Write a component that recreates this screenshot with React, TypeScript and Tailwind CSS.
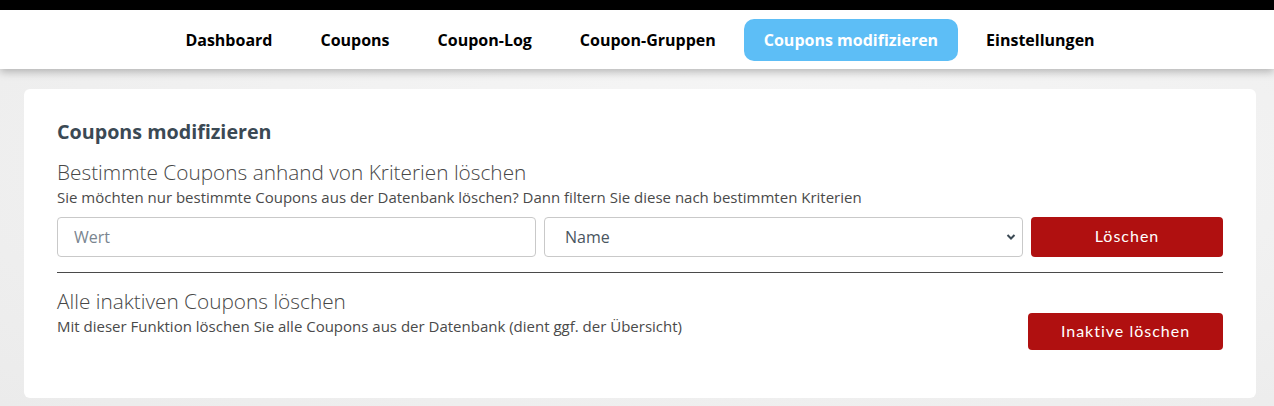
const NAV = [
  "Dashboard",
  "Coupons",
  "Coupon-Log",
  "Coupon-Gruppen",
  "Coupons modifizieren",
  "Einstellungen",
];

const ACTIVE = "Coupons modifizieren";

export default function App() {
  return (
    <div
      className="min-h-[406px] bg-[radial-gradient(ellipse_at_60%_40%,#f7f7f7,#ebebeb)]"
      style={{ fontFamily: "'Open Sans', sans-serif" }}
    >
      {/* schwarze Leiste oben */}
      <div className="h-[10px] bg-black" />

      {/* Navigation */}
      <nav className="relative z-10 h-[59px] bg-white shadow-[0_3px_8px_rgba(0,0,0,0.25)] flex items-center justify-center gap-2 pl-[6px]">
        {NAV.map((item) => (
          <a
            key={item}
            className={`px-5 h-[42px] flex items-center rounded-[10px] text-[16px] font-bold ${
              item === ACTIVE ? "bg-[#5dbef6] text-white" : "text-black"
            }`}
          >
            {item}
          </a>
        ))}
      </nav>

      {/* Inhalt */}
      <div className="pt-5 pl-6 pr-[18px]">
        <div className="bg-white rounded-md h-[309px] px-[33px] pt-[29px]">
          <h1 className="text-[19.7px] font-bold text-[#3b4954] leading-[28px]">
            Coupons modifizieren
          </h1>

          <h2 className="mt-[11px] text-[20.8px] font-light text-[#474747] leading-[30px]">
            Bestimmte Coupons anhand von Kriterien löschen
          </h2>
          <p className="text-[15px] text-[#4a4a4a] leading-[20px]">
            Sie möchten nur bestimmte Coupons aus der Datenbank löschen? Dann filtern Sie diese
            nach bestimmten Kriterien
          </p>

          <div className="mt-[10px] flex gap-2">
            <div className="flex-1 basis-0 min-w-0">
              <input
                placeholder="Wert"
                className="w-full h-[40px] border border-[#c9c9c9] rounded-[4px] px-4 text-[16px] text-[#333] placeholder:text-[#7a8590] outline-none"
              />
            </div>
            <div className="relative flex-1 basis-0 min-w-0">
              <select className="w-full h-[40px] appearance-none border border-[#c9c9c9] rounded-[4px] px-[20px] text-[16px] text-[#4a5560] bg-white outline-none">
                <option>Name</option>
              </select>
              <svg
                className="absolute right-[7px] top-[16px] w-[10px] h-[8px]"
                viewBox="0 0 10 8"
                fill="none"
                stroke="#3b4954"
                strokeWidth="2"
              >
                <path d="M1.5 2l3.5 3.5L8.5 2" />
              </svg>
            </div>
            <button className="w-[192px] h-[40px] pb-[3px] rounded-[4px] bg-[#b01010] text-white text-[16px] tracking-[1px] font-['Lato',sans-serif]">
              Löschen
            </button>
          </div>

          <hr className="mt-[15px] border-0 border-t border-[#4a4a4a]" />

          <div className="mt-[14px] flex items-start">
            <div className="flex-1">
              <h2 className="text-[20.8px] font-light text-[#474747] leading-[28px]">
                Alle inaktiven Coupons löschen
              </h2>
              <p className="text-[15px] text-[#4a4a4a] leading-[22px]">
                Mit dieser Funktion löschen Sie alle Coupons aus der Datenbank (dient ggf. der
                Übersicht)
              </p>
            </div>
            <button className="mt-[26px] w-[195px] h-[37px] pb-[2px] rounded-[4px] bg-[#b01010] text-white text-[16px] tracking-[1px] font-['Lato',sans-serif]">
              Inaktive löschen
            </button>
          </div>
        </div>
      </div>
    </div>
  );
}
